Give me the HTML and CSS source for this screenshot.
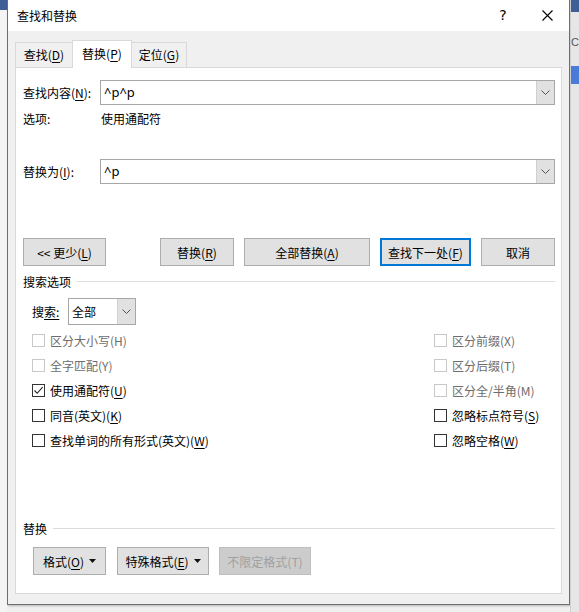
FILE: index.html
```html
<!DOCTYPE html>
<html lang="zh-CN">
<head>
<meta charset="utf-8">
<title>查找和替换</title>
<link rel="stylesheet" href="styles.css">
</head>
<body>
<div class="screen">
  <div class="side side-left"><div class="side-top"></div></div>
  <div class="dialog">
    <div class="titlebar">
      <span class="title">查找和替换</span>
      <span class="help">?</span>
      <span class="close"><svg width="11" height="11" viewBox="0 0 11 11"><path d="M0.5 0.5 L10.5 10.5 M10.5 0.5 L0.5 10.5" stroke="#000" stroke-width="1.1" fill="none"/></svg></span>
    </div>
    <div class="body">
      <div class="tabs">
        <div class="tab tab-find">查找(<u>D</u>)</div>
        <div class="tab tab-active">替换(<u>P</u>)</div>
        <div class="tab tab-goto">定位(<u>G</u>)</div>
      </div>
      <div class="panel">
        <div class="field-row">
          <span class="field-label">查找内容(<u>N</u>):</span>
          <div class="combo">
            <span class="combo-text">^p^p</span>
            <span class="combo-btn"><svg width="9" height="5" viewBox="0 0 9 5"><path d="M0.5 0.5 L4.5 4.5 L8.5 0.5" stroke="#555" stroke-width="1" fill="none"/></svg></span>
          </div>
        </div>
        <div class="options-row">
          <span class="options-label">选项:</span>
          <span>使用通配符</span>
        </div>
        <div class="field-row replace-row">
          <span class="field-label">替换为(<u>I</u>):</span>
          <div class="combo">
            <span class="combo-text">^p</span>
            <span class="combo-btn"><svg width="9" height="5" viewBox="0 0 9 5"><path d="M0.5 0.5 L4.5 4.5 L8.5 0.5" stroke="#555" stroke-width="1" fill="none"/></svg></span>
          </div>
        </div>
        <div class="btn-row">
          <div class="btn btn-less"><span>&lt;&lt; 更少(<u>L</u>)</span></div>
          <div class="btn btn-replace"><span>替换(<u>R</u>)</span></div>
          <div class="btn btn-all"><span>全部替换(<u>A</u>)</span></div>
          <div class="btn btn-next"><span>查找下一处(<u>F</u>)</span></div>
          <div class="btn btn-cancel"><span>取消</span></div>
        </div>
        <div class="section-title"><span>搜索选项</span><span class="rule"></span></div>
        <div class="search-row">
          <span class="search-label">搜<u>索:</u></span>
          <div class="select">
            <span class="select-text">全部</span>
            <span class="combo-btn"><svg width="9" height="5" viewBox="0 0 9 5"><path d="M0.5 0.5 L4.5 4.5 L8.5 0.5" stroke="#555" stroke-width="1" fill="none"/></svg></span>
          </div>
        </div>
        <div class="checks">
          <div class="check disabled"><span class="box"></span><span>区分大小写(H)</span></div>
          <div class="check disabled"><span class="box"></span><span>区分前缀(X)</span></div>
          <div class="check disabled"><span class="box"></span><span>全字匹配(Y)</span></div>
          <div class="check disabled"><span class="box"></span><span>区分后缀(T)</span></div>
          <div class="check"><span class="box"><svg width="11" height="11" viewBox="0 0 11 11"><path d="M1.5 5.5 L4.2 8.3 L9.6 2.2" stroke="#222" stroke-width="1.1" fill="none"/></svg></span><span>使用通配符(<u>U</u>)</span></div>
          <div class="check disabled"><span class="box"></span><span>区分全/半角(M)</span></div>
          <div class="check"><span class="box"></span><span>同音(英文)(<u>K</u>)</span></div>
          <div class="check"><span class="box"></span><span>忽略标点符号(<u>S</u>)</span></div>
          <div class="check"><span class="box"></span><span>查找单词的所有形式(英文)(<u>W</u>)</span></div>
          <div class="check"><span class="box"></span><span>忽略空格(<u>W</u>)</span></div>
        </div>
        <div class="section-title section-replace"><span>替换</span><span class="rule"></span></div>
        <div class="bottom-row">
          <div class="btn btn-format"><span>格式(<u>O</u>)</span><svg class="tri" width="7" height="4" viewBox="0 0 7 4"><path d="M0 0 L7 0 L3.5 4 Z" fill="#111"/></svg></div>
          <div class="btn btn-special"><span>特殊格式(<u>E</u>)</span><svg class="tri" width="7" height="4" viewBox="0 0 7 4"><path d="M0 0 L7 0 L3.5 4 Z" fill="#111"/></svg></div>
          <div class="btn btn-disabled"><span>不限定格式(T)</span></div>
        </div>
      </div>
    </div>
  </div>
  <div class="side side-right">
    <div class="rs-top"></div>
    <div class="rs-c">C</div>
    <div class="rs-blue"></div>
  </div>
</div>
</body>
</html>
```

FILE: styles.css
```css
html, body {
  margin: 0;
  padding: 0;
}
body {
  font-family: "Noto Sans CJK SC", "Noto Sans", sans-serif;
  font-size: 12px;
  color: #000;
  background: #f0f0f0;
}
u {
  text-decoration: underline;
  text-underline-offset: 2px;
}
.screen {
  display: flex;
  width: 579px;
  height: 612px;
  overflow: hidden;
}
.side-left {
  width: 7px;
  background: #f4f4f4;
  display: flex;
  flex-direction: column;
}
.side-top {
  height: 10px;
  background: #3d5f96;
}
.side-right {
  flex: 1;
  background: #e6e6e6;
  display: flex;
  flex-direction: column;
  border-left: 1px solid #cfcfcf;
}
.rs-top {
  height: 12px;
  background: #3d5f96;
}
.rs-c {
  margin-top: 22px;
  height: 16px;
  font-family: "Liberation Sans", sans-serif;
  font-size: 11px;
  color: #555;
  line-height: 16px;
}
.rs-blue {
  margin-top: 16px;
  height: 18px;
  background: #4a7bd8;
}
.dialog {
  width: 564px;
  height: 605px;
  box-sizing: border-box;
  border: 1px solid #6f6f6f;
  border-top: none;
  background: #f0f0f0;
  display: flex;
  flex-direction: column;
  box-shadow: 1px 1px 2px rgba(0,0,0,0.25);
}
.titlebar {
  height: 31px;
  background: #fff;
  display: flex;
  align-items: center;
  padding-left: 9px;
  flex-shrink: 0;
}
.title {
  flex: 1;
  font-size: 12px;
}
.help {
  width: 44px;
  text-align: center;
  font-family: "DejaVu Sans", sans-serif;
  font-size: 14px;
  line-height: 31px;
}
.close {
  width: 44px;
  height: 31px;
  display: flex;
  align-items: center;
  justify-content: center;
}
.body {
  flex: 1;
  display: flex;
  flex-direction: column;
  padding: 9px 7px 10px 7px;
  min-height: 0;
}
.tabs {
  display: flex;
  align-items: flex-end;
  height: 27px;
  flex-shrink: 0;
}
.tab {
  box-sizing: border-box;
  height: 25px;
  border: 1px solid #d9d9d9;
  border-bottom: none;
  background: #f0f0f0;
  text-align: center;
  line-height: 24px;
}
.tab-find {
  width: 58px;
}
.tab-active {
  width: 60px;
  height: 28px;
  line-height: 26px;
  margin-left: -1px;
  margin-bottom: -1px;
  background: #fff;
  position: relative;
  z-index: 1;
}
.tab-goto {
  width: 56px;
  margin-left: -1px;
}
.panel {
  flex: 1;
  background: #fff;
  border: 1px solid #d9d9d9;
  padding: 12px 6px 0 7px;
  display: flex;
  flex-direction: column;
}
.field-row {
  display: flex;
  align-items: center;
  height: 25px;
}
.field-label {
  width: 77px;
  flex-shrink: 0;
}
.combo {
  flex: 1;
  height: 25px;
  box-sizing: border-box;
  border: 1px solid #a6a6a6;
  display: flex;
}
.combo-text {
  flex: 1;
  padding-left: 3px;
  font-family: "Noto Sans", sans-serif;
  font-size: 13px;
  line-height: 23px;
}
.combo-btn {
  width: 17px;
  background: #e1e1e1;
  border-left: 1px solid #d0d0d0;
  display: flex;
  align-items: center;
  justify-content: center;
}
.options-row {
  margin-top: 6px;
  height: 16px;
  line-height: 16px;
  display: flex;
}
.options-label {
  width: 78px;
}
.replace-row {
  margin-top: 32px;
}
.btn-row {
  margin-top: 54px;
  display: flex;
  gap: 10px;
  height: 28px;
}
.btn {
  box-sizing: border-box;
  height: 28px;
  border: 1px solid #adadad;
  background: #e1e1e1;
  display: flex;
  align-items: center;
  justify-content: center;
  gap: 5px;
  white-space: nowrap;
}
.btn-less { width: 83px; margin-right: 44px; }
.btn-replace { width: 74px; }
.btn-all { width: 126px; }
.btn-next { width: 91px; border: 2px solid #0078d7; }
.btn-cancel { width: 74px; }
.section-title {
  margin-top: 7px;
  height: 16px;
  display: flex;
  align-items: center;
}
.rule {
  flex: 1;
  height: 1px;
  background: #dcdcdc;
  margin-left: 6px;
}
.search-row {
  margin-top: 9px;
  display: flex;
  align-items: center;
  height: 27px;
  padding-left: 9px;
}
.search-label {
  width: 36px;
}
.select {
  width: 68px;
  height: 27px;
  box-sizing: border-box;
  border: 1px solid #a6a6a6;
  display: flex;
}
.select-text {
  flex: 1;
  padding-left: 3px;
  line-height: 25px;
}
.checks {
  margin-top: 3px;
  padding-left: 9px;
  display: grid;
  grid-template-columns: 402px 1fr;
  grid-auto-rows: 25px;
}
.check {
  display: flex;
  align-items: center;
  gap: 5px;
}
.box {
  width: 13px;
  height: 13px;
  box-sizing: border-box;
  border: 1px solid #333;
  display: flex;
  align-items: center;
  justify-content: center;
  background: #fff;
}
.check.disabled {
  color: #6d6d6d;
}
.check.disabled .box {
  border-color: #c8c8c8;
}
.section-replace {
  margin-top: 67px;
}
.bottom-row {
  margin-top: 11px;
  display: flex;
  gap: 10px;
  padding-left: 10px;
}
.btn-format { width: 73px; }
.btn-special { width: 92px; margin-left: 1px; }
.btn-disabled {
  width: 92px;
  background: #cccccc;
  border-color: #bfbfbf;
  color: #a0a0a0;
}
.tri {
  flex-shrink: 0;
}
```
